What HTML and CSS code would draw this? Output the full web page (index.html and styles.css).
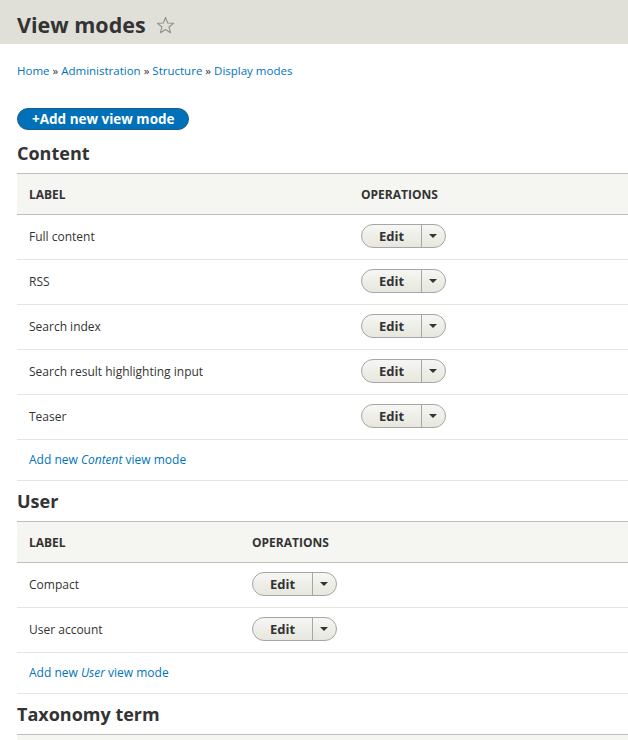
FILE: index.html
```html
<!DOCTYPE html>
<html lang="en">
<head>
<meta charset="utf-8">
<title>View modes</title>
<link rel="stylesheet" href="styles.css">
</head>
<body>
<header class="page-header">
  <h1 class="page-title">View modes
    <svg class="star" viewBox="0 0 20 20" width="19" height="19" aria-hidden="true"><path d="M10 1.6 L12.3 7.4 L18.5 7.7 L13.7 11.6 L15.3 17.6 L10 14.2 L4.7 17.6 L6.3 11.6 L1.5 7.7 L7.7 7.4 Z" fill="none" stroke="#8f8f88" stroke-width="1.1" stroke-linejoin="round"/></svg>
  </h1>
</header>
<main class="content">
  <nav class="breadcrumb">
    <a href="#">Home</a> » <a href="#">Administration</a> » <a href="#">Structure</a> » <a href="#">Display modes</a>
  </nav>
  <div class="actions"><a class="button-primary" href="#">+Add new view mode</a></div>

  <h2 class="section-title">Content</h2>
  <table class="modes">
    <thead><tr><th class="label-col label-content">Label</th><th>Operations</th></tr></thead>
    <tbody>
      <tr><td>Full content</td><td><span class="dropbutton"><span class="db-main">Edit</span><span class="db-toggle"><span class="caret"></span></span></span></td></tr>
      <tr><td>RSS</td><td><span class="dropbutton"><span class="db-main">Edit</span><span class="db-toggle"><span class="caret"></span></span></span></td></tr>
      <tr><td>Search index</td><td><span class="dropbutton"><span class="db-main">Edit</span><span class="db-toggle"><span class="caret"></span></span></span></td></tr>
      <tr><td>Search result highlighting input</td><td><span class="dropbutton"><span class="db-main">Edit</span><span class="db-toggle"><span class="caret"></span></span></span></td></tr>
      <tr><td>Teaser</td><td><span class="dropbutton"><span class="db-main">Edit</span><span class="db-toggle"><span class="caret"></span></span></span></td></tr>
      <tr class="add-row"><td colspan="2"><a href="#">Add new <em>Content</em> view mode</a></td></tr>
    </tbody>
  </table>

  <h2 class="section-title">User</h2>
  <table class="modes">
    <thead><tr><th class="label-col label-user">Label</th><th>Operations</th></tr></thead>
    <tbody>
      <tr><td>Compact</td><td><span class="dropbutton"><span class="db-main">Edit</span><span class="db-toggle"><span class="caret"></span></span></span></td></tr>
      <tr><td>User account</td><td><span class="dropbutton"><span class="db-main">Edit</span><span class="db-toggle"><span class="caret"></span></span></span></td></tr>
      <tr class="add-row"><td colspan="2"><a href="#">Add new <em>User</em> view mode</a></td></tr>
    </tbody>
  </table>

  <h2 class="section-title">Taxonomy term</h2>
  <table class="modes">
    <thead><tr><th class="label-col label-content">Label</th><th>Operations</th></tr></thead>
  </table>
</main>
</body>
</html>
```
FILE: styles.css
```css
* { box-sizing: border-box; }
html, body { margin: 0; padding: 0; }
body {
  font-family: "Open Sans", "DejaVu Sans", sans-serif;
  font-size: 12px;
  color: #333;
  background: #fff;
  overflow: hidden;
}
a { color: #0074bd; text-decoration: none; }

.page-header {
  background: #e0e0d8;
  height: 44px;
  padding: 0 17px;
}
.page-title {
  margin: 0;
  font-size: 21.5px;
  font-weight: 700;
  line-height: 28px;
  color: #333;
  display: flex;
  align-items: center;
  gap: 10px;
  height: 44px;
  padding-top: 6px;
}
.star { display: block; margin-top: 0; }

.content { padding: 0 0 0 17px; }

.breadcrumb {
  padding-top: 19px;
  line-height: 16px;
  font-size: 11.5px;
}
.actions { margin-top: 29px; }
.button-primary {
  display: inline-block;
  background: #0071b8;
  border: 1px solid #1e5c90;
  color: #fff;
  font-weight: 700;
  font-size: 13.5px;
  line-height: 20px;
  height: 22px;
  padding: 0 13px 0 14px;
  border-radius: 11px;
}

.section-title {
  margin: 0;
  font-size: 18px;
  font-weight: 700;
  line-height: 22px;
  padding-top: 12px;
  padding-bottom: 9px;
  color: #333;
}
.modes + .section-title { padding-top: 9px; }

.modes {
  width: 100%;
  border-collapse: collapse;
  margin: 0;
}
.modes th {
  background: #f5f5f2;
  border-top: 1px solid #bfbfba;
  border-bottom: 1px solid #bfbfba;
  text-align: left;
  text-transform: uppercase;
  font-weight: 700;
  font-size: 12px;
  height: 41px;
  padding: 0 12px;
  color: #333;
}
.label-content { width: 332px; }
.label-user { width: 223px; }
.modes td {
  border-bottom: 1px solid #e6e4df;
  height: 45px;
  padding: 0 12px 2px;
  vertical-align: middle;
}
.modes tr.add-row td { height: 41px; }

.dropbutton {
  display: inline-flex;
  height: 24px;
  border: 1px solid #a6a6a6;
  border-radius: 12px;
  background: linear-gradient(#f6f6f3, #e7e7df);
  vertical-align: middle;
  overflow: hidden;
}
.db-main {
  width: 59px;
  text-align: center;
  font-weight: 700;
  font-size: 13px;
  line-height: 22px;
  color: #333;
}
.db-toggle {
  width: 24px;
  border-left: 1px solid #a6a6a6;
  display: flex;
  align-items: center;
  justify-content: center;
}
.caret {
  width: 0;
  height: 0;
  border-left: 4px solid transparent;
  border-right: 4px solid transparent;
  border-top: 4px solid #333;
  margin-right: 2px;
}
```
